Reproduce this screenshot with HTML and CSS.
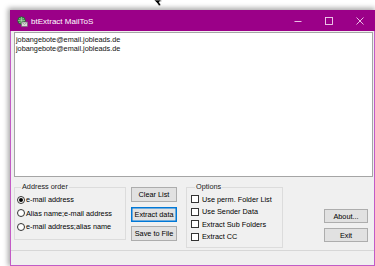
FILE: index.html
```html
<!DOCTYPE html>
<html lang="en">
<head>
  <meta charset="UTF-8" />
  <title>btExtract MailToS</title>
  <link rel="stylesheet" href="styles.css">
</head>
<body>
  <div class="screen">
    <svg class="cursor" width="10" height="6" viewBox="0 0 10 6">
      <path d="M1 0 L4 3 L6 6 L8 5 L6 2 L9 1 L7 0 Z" fill="#000" stroke="#fff" stroke-width="0.6" />
    </svg>

    <div class="window">
      <div class="titlebar">
        <svg class="app-icon" width="11" height="11" viewBox="0 0 11 11">
          <circle cx="4.5" cy="4.5" r="3.8" fill="#3f8f4a" stroke="#1f5a2a" stroke-width="0.6" />
          <path d="M1 4.5 H8 M4.5 1 V8 M2 2.5 Q4.5 4 7 2.5 M2 6.5 Q4.5 5 7 6.5" stroke="#cfe8c8" stroke-width="0.5" fill="none" />
          <rect x="4.5" y="6" width="6" height="4.5" fill="#d8d8d8" stroke="#6a6a6a" stroke-width="0.6" />
          <path d="M5.2 6.6 L7.5 8.4 L9.8 6.6" stroke="#6a6a6a" stroke-width="0.5" fill="none" />
        </svg>
        <span class="title">btExtract MailToS</span>
        <div class="controls">
          <span class="ctl">
            <svg width="8" height="8" viewBox="0 0 8 8"><path d="M0.5 4.5 H7.5" stroke="#f3d4ef" stroke-width="0.9" /></svg>
          </span>
          <span class="ctl">
            <svg width="8" height="8" viewBox="0 0 8 8"><rect x="0.5" y="0.5" width="7" height="7" fill="none" stroke="#f3d4ef" stroke-width="0.9" /></svg>
          </span>
          <span class="ctl">
            <svg width="8" height="8" viewBox="0 0 8 8"><path d="M0.5 0.5 L7.5 7.5 M7.5 0.5 L0.5 7.5" stroke="#f3d4ef" stroke-width="0.9" /></svg>
          </span>
        </div>
      </div>

      <div class="client">
        <div class="listbox">
          <div>jobangebote@email.jobleads.de</div>
          <div>jobangebote@email.jobleads.de</div>
        </div>

        <div class="panel">
          <fieldset class="group address">
            <legend>Address order</legend>
            <label class="option"><span class="radio checked"></span>e-mail address</label>
            <label class="option"><span class="radio"></span>Alias name;e-mail address</label>
            <label class="option"><span class="radio"></span>e-mail address;alias name</label>
          </fieldset>

          <div class="buttons">
            <button class="btn">Clear List</button>
            <button class="btn focused">Extract data</button>
            <button class="btn">Save to File</button>
          </div>

          <fieldset class="group options">
            <legend>Options</legend>
            <label class="option check"><span class="box"></span>Use perm. Folder List</label>
            <label class="option check"><span class="box"></span>Use Sender Data</label>
            <label class="option check"><span class="box"></span>Extract Sub Folders</label>
            <label class="option check"><span class="box"></span>Extract CC</label>
          </fieldset>

          <div class="side-buttons">
            <button class="btn">About...</button>
            <button class="btn">Exit</button>
          </div>
        </div>

        <div class="statusbar"></div>
      </div>
    </div>
  </div>
</body>
</html>
```

FILE: styles.css
```css
/* Base */
* {
  box-sizing: border-box;
}

body {
  margin: 0;
  background: #fff;
  font-family: 'Liberation Sans', Arial, sans-serif;
  color: #000;
}

.screen {
  position: relative;
  width: 375px;
  height: 266px;
  overflow: hidden;
  padding: 10px 0 0 10px;
}

/* Mouse pointer at the top */
.cursor {
  position: absolute;
  left: 153px;
  top: 0;
}

/* Window frame */
.window {
  width: 365px;
  height: 256px;
  display: flex;
  flex-direction: column;
  border: 1px solid #c35bc6;
  border-top: none;
  box-shadow: -1px -1px 5px 1px rgba(0, 0, 0, 0.35);
}

.titlebar {
  height: 21px;
  margin: 0 -1px;
  background: #9b0088;
  display: flex;
  align-items: center;
  padding-left: 7px;
  flex-shrink: 0;
}

.app-icon {
  display: block;
  margin-top: 1px;
}

.title {
  margin-left: 3px;
  margin-top: 2px;
  font-size: 8px;
  color: #fff;
}

.controls {
  margin-left: auto;
  display: flex;
  height: 100%;
}

.ctl {
  width: 31px;
  display: flex;
  align-items: center;
  justify-content: center;
  padding-top: 1px;
}

.ctl svg {
  display: block;
}

/* Client area */
.client {
  flex: 1;
  display: flex;
  flex-direction: column;
  background: #f0f0f0;
  font-size: 7.3px;
}

.listbox {
  margin: 1px 1px 0 3px;
  height: 145px;
  background: #fff;
  border: 1px solid #a5a5a5;
  padding: 3px 1px;
  line-height: 8.7px;
  color: #111;
  flex-shrink: 0;
}

.panel {
  display: flex;
  align-items: flex-start;
  padding: 5px 6px 0 3px;
}

/* Group boxes */
.group {
  margin: 0;
  border: 1px solid #dcdcdc;
  padding: 1px 0 0 2px;
}

.group legend {
  margin-left: 4px;
  padding: 0 1px;
  line-height: 10px;
  color: #1a1a1a;
}

.address {
  width: 112px;
  height: 58px;
}

.options {
  width: 97px;
  height: 66px;
  margin-left: 9px;
  padding-left: 4px;
}

.option {
  display: flex;
  align-items: center;
  height: 13.5px;
  white-space: nowrap;
}

.option.check {
  height: 12.5px;
}

.radio {
  width: 8px;
  height: 8px;
  border: 1px solid #333;
  border-radius: 50%;
  background: #fff;
  margin-right: 1px;
  display: flex;
  align-items: center;
  justify-content: center;
  flex-shrink: 0;
}

.radio.checked::after {
  content: '';
  width: 4px;
  height: 4px;
  border-radius: 50%;
  background: #000;
}

.box {
  width: 8px;
  height: 8px;
  border: 1px solid #333;
  background: #fff;
  margin-right: 3px;
  flex-shrink: 0;
}

/* Buttons */
.btn {
  display: block;
  font-family: inherit;
  font-size: 7.3px;
  color: #000;
  background: #e1e1e1;
  border: 1px solid #adadad;
  padding: 0;
  margin: 0;
}

.btn.focused {
  border-color: #0078d7;
  box-shadow: inset 0 0 0 0.5px #0078d7;
}

.buttons {
  display: flex;
  flex-direction: column;
  gap: 4.5px;
  width: 46px;
  margin: 5px 0 0 5px;
}

.buttons .btn {
  height: 15px;
}

.side-buttons {
  margin: 27px 0 0 auto;
  width: 44px;
  display: flex;
  flex-direction: column;
  gap: 5px;
}

.side-buttons .btn {
  height: 14px;
}

/* Status bar */
.statusbar {
  margin-top: auto;
  height: 15px;
  border-top: 1px solid #d7d7d7;
}
```
